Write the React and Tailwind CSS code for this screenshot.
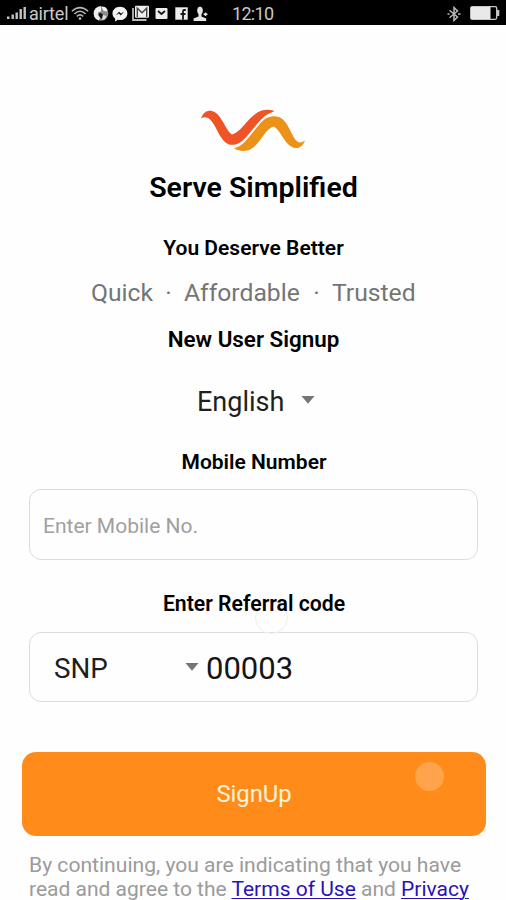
import React, { useState } from 'react'

function StatusBar() {
    return (
        <div className="flex h-[25px] shrink-0 items-center bg-black text-[#c9c9c9]">
            <svg className="mt-[2px] ml-[7px] h-[13px] w-[20px]" viewBox="0 0 20 13" fill="#c4c4c4">
                <rect x="0" y="9.5" width="2.5" height="2.5" />
                <rect x="4.5" y="7.5" width="2.4" height="4.500" />
                <rect x="8.500" y="5.500" width="2.400" height="6.500" />
                <rect x="12.500" y="2" width="2.400" height="10" />
                <rect x="16.500" y="0" width="2.400" height="12" />
            </svg>
            <span className="mt-[2px] ml-[2px] w-[38px] whitespace-nowrap text-[18px] leading-[25px] tracking-[-0.2px]">airtel</span>
            <svg className="mt-[2px] ml-[4px] h-[15px] w-[18px]" viewBox="0 0 20 16" fill="none" stroke="#b5b5b5" strokeWidth="1.8">
                <path d="M1 5.5Q10 -2.5 19 5.5" />
                <path d="M3.8 8.4Q10 2.6 16.2 8.4" />
                <path d="M6.5 11.2Q10 7.8 13.5 11.2" />
                <circle cx="10" cy="13.6" r="1.5" fill="#b5b5b5" stroke="none" />
            </svg>
            {/* notification icons */}
            <svg className="mt-[2px] ml-[4px] h-[17px] w-[16px]" viewBox="0 0 16 17">
                <circle cx="8" cy="8.5" r="7.3" fill="#8c8c8c" />
                <path d="M8 1.2A7.3 7.3 0 0 0 .7 8.5a7.3 7.3 0 0 0 5 6.9l1.6-2.3-2.5-3.2.4-2.7 2.8-.8z" fill="#efefef" />
                <path d="M8.5 1.8l3.6.3 2.4 3-1 1.4-3-.8z" fill="#f5f5f5" />
                <path d="M7 7.5l3 2-1 4.5-2-1.5-1.5-3z" fill="#161616" />
                <path d="M10 10l3.5 1-2 3.5-2.5.5z" fill="#dedede" />
            </svg>
            <svg className="mt-[2px] ml-[3px] h-[16px] w-[16px]" viewBox="0 0 16 16">
                <path d="M8 .8C3.7.8.5 3.7.5 7.4c0 2.1 1 3.9 2.6 5.1v3l2.7-1.7c.7.2 1.5.3 2.2.3 4.2 0 7.4-3 7.4-6.7S12.200.8 8 .8z" fill="#f2f2f2" />
                <path d="M3.7 9.3l3.4-3.6 1.9 1.8 3.300-1.900-3.500 3.800-1.900-1.900z" fill="#111" />
            </svg>
            <svg className="mt-[1px] ml-[4px] h-[16px] w-[18px]" viewBox="0 0 18 16">
                <path d="M1 3v12h13.500" fill="none" stroke="#b9b9b9" strokeWidth="1.8" />
                <rect x="3" y=".7" width="14" height="12" rx="1" fill="#ededed" />
                <path d="M5.300 12V3.200l4.700 4.500 4.700-4.500V12" fill="none" stroke="#444" strokeWidth="1.4" />
            </svg>
            <svg className="mt-[1px] ml-[5px] h-[13px] w-[13px]" viewBox="0 0 13 13">
                <rect x=".5" y="1" width="12" height="11" rx="1" fill="#ededed" />
                <path d="M3 4l3.500 3L10 4" fill="none" stroke="#161616" strokeWidth="1.8" />
            </svg>
            <svg className="mt-[2px] ml-[7px] h-[13px] w-[13px]" viewBox="0 0 13 13">
                <rect x=".3" y=".3" width="12.400" height="12.400" fill="#ededed" />
                <path d="M10.800 3H9.300Q8 3 8 4.500V12.700M5.500 7h5" fill="none" stroke="#161616" strokeWidth="1.8" />
            </svg>
            <svg className="mt-[3px] ml-[5px] h-[16px] w-[16px]" viewBox="0 0 16 16" fill="#e6e6e6">
                <ellipse cx="7" cy="4.500" rx="2.800" ry="3.800" />
                <path d="M5.500 7h3v3.500l4.700 2V15H.6v-2.400l4.900-2.100z" />
                <path d="M10.500 8.200h4M12.500 6.500v3.500" stroke="#e6e6e6" strokeWidth="1.500" />
            </svg>
            <span className="mt-[2px] ml-[23px] text-[18px] leading-[25px] tracking-[-0.7px]">12:10</span>
            <svg className="mt-[2px] ml-auto h-[16px] w-[14px]" viewBox="0 0 14 16" fill="none" stroke="#b8b8b8" strokeWidth="1.500">
                <path d="M2.500 4.300L10.500 11 7 14.500V1.500L10.500 5 2.500 11.700" />
                <path d="M.5 8h2M11 8h2.500" />
            </svg>
            <svg className="mt-[1px] mr-[6px] ml-[9px] h-[14px] w-[30px]" viewBox="0 0 30 14">
                <rect x=".7" y=".7" width="26" height="12.600" rx="1.500" fill="none" stroke="#c8c8c8" strokeWidth="1.300" />
                <rect x="1" y="1" width="19.500" height="12" fill="#e9e9e9" />
                <path d="M27 4h2.300v6H27z" fill="#c8c8c8" />
            </svg>
        </div>
    )
}

function Logo() {
    return (
        <svg className="mt-[83px] ml-[200px] h-[44px] w-[107px]" viewBox="0 0 107 44">
            <path d="M1 10.500C3 5 6 2.500 11 2.800C21 4 25 22 32 26.500C42 24 48 8 61 2.800C65 1.500 70 1.500 74.500 3C71 5 68 5.500 65 8C57 14 50 27 42 33C38 36.500 33 37.500 29 36.500C20 33 17 19 11 12.500C8 9 4 8.500 1 10.500Z" fill="#ee5426" />
            <path d="M34 40.200C46 39 55 18 65 11C70 7.500 78 7 83 11.500C90 18 92 30 98 34C100 35 102 34.500 105 32.500C103 38 99 41.500 93 39.500C84 36 81 22 73.500 18.500C65 21 60 36 51 41C46 44 39 43.500 34 40.200Z" fill="#ec9218" />
        </svg>
    )
}

function Caret() {
    return (
        <svg className="mb-[4px] h-[8px] w-[14px]" viewBox="0 0 14 8">
            <path d="M.5 0h13L7 7.800z" fill="#757575" />
        </svg>
    )
}

function App() {
    const [mobile, setMobile] = useState('');
    const [code, setCode] = useState('00003');
    return (
        <div className="flex h-[900px] w-[506px] flex-col overflow-hidden bg-[#fefefe] font-['Roboto',sans-serif] text-black">
            <StatusBar />
            <div className="h-[127px] shrink-0">
                <Logo />
            </div>
            <h1 className="mt-[20px] pl-[1px] text-center text-[28.5px] leading-[32px] font-semibold whitespace-nowrap">Serve Simplified</h1>
            <h2 className="mt-[30px] pl-[1px] text-center text-[21px] leading-[28px] font-semibold whitespace-nowrap">You Deserve Better</h2>
            <div className="mt-[15px] ml-[91px] flex text-[24.7px] leading-[32px] whitespace-nowrap text-[#757575]">
                <span className="w-[62px]">Quick</span>
                <span className="w-[31px] text-center">·</span>
                <span className="w-[117px]">Affordable</span>
                <span className="w-[31px] text-center">·</span>
                <span className="w-[83px]">Trusted</span>
            </div>
            <h2 className="mt-[16px] pl-[1px] text-center text-[22.4px] leading-[28px] font-semibold whitespace-nowrap">New User Signup</h2>
            <button className="mt-[33px] ml-[197px] flex items-center text-left text-[27px] leading-[32px] text-[#1f1f1f]">
                <span className="w-[104px]">English</span>
                <Caret />
            </button>
            <label className="mt-[30px] pl-[2px] text-center text-[21px] leading-[28px] font-semibold whitespace-nowrap">Mobile Number</label>
            <input
                className="mt-[13px] ml-[29px] h-[71px] w-[449px] shrink-0 rounded-[12px] border-[1.5px] border-[#dcdcdc] bg-transparent px-[13px] pt-[3px] text-[21px] outline-none placeholder:text-[#a0a0a0]"
                placeholder="Enter Mobile No."
                value={mobile}
                onChange={(e) => setMobile(e.target.value)}
            />
            <div className="relative mt-[30px] mb-[1px] pl-[2px] text-center text-[21.2px] leading-[28px] font-semibold whitespace-nowrap">
                <span className="absolute top-[11px] left-[255px] h-[33px] w-[33px] rounded-full border border-[#eeeeee]"></span>
                <label className="relative">Enter Referral code</label>
            </div>
            <div className="mt-[13px] ml-[29px] flex h-[70px] w-[449px] shrink-0 items-center rounded-[12px] border-[1.5px] border-[#dcdcdc] pt-[3px] pl-[24px]">
                <button className="flex items-center text-left text-[27.8px] leading-[32px] text-[#1f1f1f]">
                    <span className="w-[131px]">SNP</span>
                    <Caret />
                </button>
                <input
                    className="ml-[7px] w-[200px] bg-transparent text-[31px] leading-[36px] text-[#151515] outline-none"
                    value={code}
                    onChange={(e) => setCode(e.target.value)}
                />
            </div>
            <button className="relative mt-[50px] ml-[22px] h-[84px] w-[464px] shrink-0 rounded-[14px] bg-[#ff8c1a] pt-[2px] text-[23.8px] text-[#fff3dc]">
                SignUp
                <span className="absolute top-[10px] left-[393px] h-[29px] w-[29px] rounded-full bg-[#ffa34d]"></span>
            </button>
            <p className="mt-[17px] ml-[29px] text-[21.1px] leading-[24px] whitespace-nowrap text-[#9b9b9b]">
                By continuing, you are indicating that you have<br />
                <span className="text-[21px]">read and agree to the <a className="text-[#2a12b8] underline decoration-[1px] underline-offset-[2px]">Terms of Use</a> and <a className="text-[#2a12b8] underline decoration-[1px] underline-offset-[2px]">Privacy</a></span>
            </p>
        </div>
    )
}

export default App
